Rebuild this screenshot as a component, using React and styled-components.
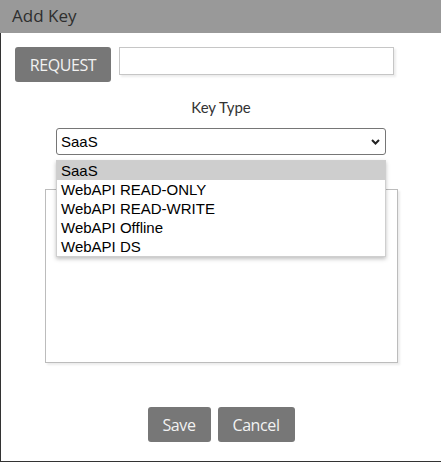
import React from 'react';
import styled, { createGlobalStyle } from 'styled-components';

const Global = createGlobalStyle`
  html, body { margin: 0; padding: 0; background: #fff; }
  body { font-family: "Open Sans", sans-serif; }
  * { box-sizing: border-box; }
`;

const Window = styled.div`
  width: 441px;
  height: 462px;
  display: flex;
  flex-direction: column;
  border-bottom: 1px solid #333;
`;

const Header = styled.div`
  height: 33px;
  flex-shrink: 0;
  background: #999;
  color: #2e2e2e;
  font: 17px/31px "Open Sans", sans-serif;
  padding-left: 12px;
`;

const Body = styled.div`
  flex: 1;
  border-left: 1px solid #333;
  display: flex;
  flex-direction: column;
  align-items: center;
`;

const RequestRow = styled.div`
  align-self: stretch;
  display: flex;
  align-items: flex-start;
  gap: 8px;
  padding: 14px 0 0 14px;
`;

const Button = styled.button`
  width: ${p => p.$w}px;
  height: 35px;
  border: none;
  border-radius: 3px;
  background: #777;
  color: #f2f2f2;
  font: 16px "Open Sans", sans-serif;
  letter-spacing: -0.4px;
  padding: 0;
  cursor: pointer;
`;

const TextInput = styled.input`
  width: 275px;
  height: 28px;
  border: 1px solid #c6c6c6;
  box-shadow: 2px 2px 2px rgba(0, 0, 0, 0.08);
  outline: none;
  font: 15px "Liberation Sans", Arial, sans-serif;
`;

const Label = styled.div`
  margin-top: 16px;
  font: 15px/18px Lato, sans-serif;
  color: #333;
`;

const SelectWrap = styled.div`
  position: relative;
  width: 330px;
  margin-top: 12px;
`;

const SelectBox = styled.div`
  height: 27px;
  border: 1px solid #767676;
  border-radius: 3px;
  display: flex;
  align-items: center;
  justify-content: space-between;
  padding: 0 5px 0 4px;
  font: 15px "Liberation Sans", Arial, sans-serif;
  color: #000;
`;

const List = styled.ul`
  position: absolute;
  top: 32px;
  left: 0;
  width: 330px;
  margin: 0;
  padding: 0;
  list-style: none;
  background: #fff;
  border: 1px solid #cfcfcf;
  box-shadow: 0 2px 4px rgba(0, 0, 0, 0.25);
  z-index: 2;
`;

const Option = styled.li`
  height: 19px;
  padding-left: 4px;
  font: 15px/19px "Liberation Sans", Arial, sans-serif;
  color: #000;
  background: ${p => (p.$selected ? '#cecece' : '#fff')};
`;

const Notes = styled.textarea`
  display: block;
  width: 353px;
  height: 174px;
  margin-top: 34px;
  border: 1px solid #bcbcbc;
  box-shadow: 2px 2px 2px rgba(0, 0, 0, 0.08);
  resize: none;
  outline: none;
  font: 15px "Liberation Sans", Arial, sans-serif;
`;

const Actions = styled.div`
  display: flex;
  gap: 7px;
  margin-top: 44px;
`;

const Chevron = () => (
  <svg width="9" height="6" viewBox="0 0 9 6" aria-hidden="true">
    <path d="M1 1 L4.5 4.5 L8 1" fill="none" stroke="#222" strokeWidth="2" />
  </svg>
);

const options = ['SaaS', 'WebAPI READ-ONLY', 'WebAPI READ-WRITE', 'WebAPI Offline', 'WebAPI DS'];

export default function App() {
  return (
    <>
      <Global />
      <Window>
        <Header>Add Key</Header>
        <Body>
          <RequestRow>
            <Button $w={96}>REQUEST</Button>
            <TextInput type="text" />
          </RequestRow>
          <Label>Key Type</Label>
          <SelectWrap>
            <SelectBox>
              <span>SaaS</span>
              <Chevron />
            </SelectBox>
            <List>
              {options.map((o, i) => (
                <Option key={o} $selected={i === 0}>{o}</Option>
              ))}
            </List>
          </SelectWrap>
          <Notes />
          <Actions>
            <Button $w={63}>Save</Button>
            <Button $w={77}>Cancel</Button>
          </Actions>
        </Body>
      </Window>
    </>
  );
}
